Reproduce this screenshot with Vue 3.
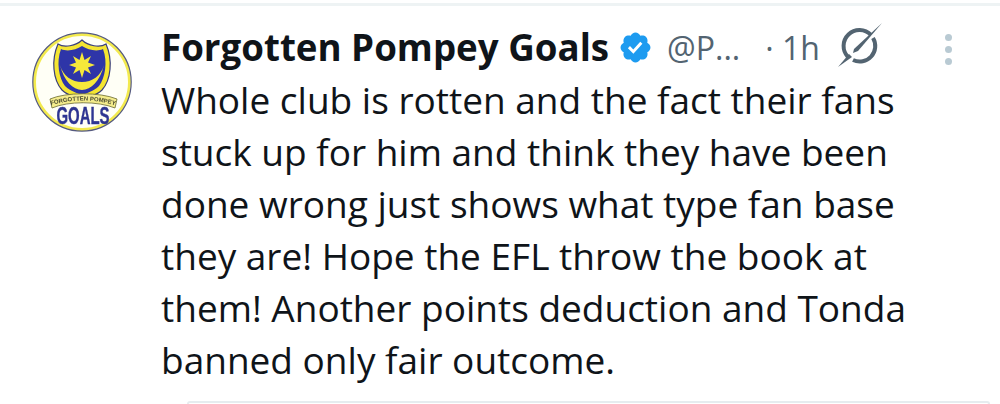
<script setup>
const lines = [
  'Whole club is rotten and the fact their fans',
  'stuck up for him and think they have been',
  'done wrong just shows what type fan base',
  'they are! Hope the EFL throw the book at',
  'them! Another points deduction and Tonda',
  'banned only fair outcome.',
]
</script>

<template>
  <div class="tweet">
    <div class="avatar-col">
      <svg class="avatar" width="100" height="100" viewBox="0 0 100 100">
        <circle cx="50" cy="50" r="47.500" fill="#fffff6" stroke="#f3ea4e" stroke-width="3" />
        <circle cx="50" cy="50" r="49.200" fill="none" stroke="#555a80" stroke-width="1.200" />
        <path d="M50 8 C56 14 68 16 74 12 C81 28 79 48 70 58 C63 65 55 64 50 70 C45 64 37 65 30 58 C21 48 19 28 26 12 C32 16 44 14 50 8Z" fill="#f4e531" stroke="#3a3f7a" stroke-width="1.200" />
        <path d="M50 14 C56 18 65 20 71 17 C76 30 73 46 67 54 C61 60 55 60 50 64 C45 60 39 60 33 54 C27 46 24 30 29 17 C35 20 44 18 50 14Z" fill="#2e35a8" />
        <path d="M28 33 C32 49 41 58 50 58 C59 58 68 49 72 33 C69 44 60 50 50 50 C40 50 31 44 28 33Z" fill="#f6e93a" />
        <path d="M50 20 L52.500 28 L59 24 L56 30.500 L63 33 L56 35.500 L59 42 L52.500 38 L50 46 L47.500 38 L41 42 L44 35.500 L37 33 L44 30.500 L41 24 L47.500 28Z" fill="#f6e93a" />
        <path d="M18 67 C34 60 68 60 85 67 L83 76 C66 69 36 69 20 76Z" fill="#f4ec8c" stroke="#6a6a30" stroke-width="0.800" />
        <path id="banner-arc" d="M14 75 Q51 62 88 75" fill="none" />
        <text class="logo-small" text-anchor="middle">
          <textPath href="#banner-arc" startOffset="50%">FORGOTTEN POMPEY</textPath>
        </text>
        <text x="51" y="92" text-anchor="middle" textLength="53" lengthAdjust="spacingAndGlyphs" class="logo-goals">GOALS</text>
      </svg>
    </div>
    <div class="body">
      <div class="head">
        <span class="name">Forgotten Pompey Goals</span>
        <svg class="badge" width="35" height="35" viewBox="0 0 24 24">
          <path fill="#1d9bf0" d="M22.250 12c0-1.430-.880-2.670-2.190-3.340.460-1.390.200-2.900-.810-3.910s-2.520-1.270-3.910-.810c-.660-1.310-1.910-2.190-3.340-2.190s-2.670.880-3.330 2.190c-1.400-.460-2.910-.200-3.920.810s-1.260 2.520-.800 3.910c-1.310.670-2.200 1.910-2.200 3.340s.890 2.670 2.200 3.340c-.460 1.390-.210 2.900.800 3.910s2.520 1.260 3.910.810c.670 1.310 1.910 2.190 3.340 2.190s2.680-.880 3.340-2.190c1.390.450 2.900.200 3.910-.810s1.270-2.520.810-3.910c1.310-.670 2.190-1.910 2.190-3.340zm-11.710 4.200L6.800 12.460l1.410-1.420 2.260 2.260 4.800-5.230 1.470 1.360-6.200 6.770z" />
        </svg>
        <span class="handle">@P...</span>
        <span class="time">· 1h</span>
        <svg class="grok" width="48" height="46" viewBox="0 0 48 46">
          <path d="M36 13 A15.500 15.500 0 0 0 13 35" fill="none" stroke="#536471" stroke-width="4" />
          <path d="M14 32 L3 45 L17 35Z" fill="#536471" />
          <path d="M38 16 A15.500 15.500 0 0 1 18 38" fill="none" stroke="#536471" stroke-width="4" />
          <path d="M47 1 L19 27 L18 31 L23 29Z" fill="#536471" />
        </svg>
        <span class="more">
          <i></i><i></i><i></i>
        </span>
      </div>
      <div class="text">
        <div v-for="line in lines" :key="line">{{ line }}</div>
      </div>
    </div>
  </div>
  <div class="card-top"></div>
</template>

<style>
html, body { margin: 0; background: #fff; overflow: hidden; height: 404px; }
</style>

<style scoped>
.tweet {
  width: 1000px;
  height: 398px;
  box-sizing: border-box;
  border-top: 3px solid #eef3f4;
  margin-top: 3px;
  display: flex;
  font-family: "Open Sans", "Liberation Sans", sans-serif;
  color: #0f1419;
}
.avatar-col { width: 161px; padding: 26px 0 0 32px; box-sizing: border-box; }
.avatar { display: block; filter: blur(0.4px); overflow: visible; }
.logo-small { font: 700 6px "Liberation Sans", sans-serif; fill: #4a4a30; }
.logo-goals { font: 700 23px "Liberation Sans", sans-serif; fill: #2e3591; stroke: #2e3591; stroke-width: 0.400px; }
.body { flex: 1; padding-top: 18px; }
.head { display: flex; align-items: center; height: 46px; position: relative; }
.name { font-size: 36.700px; font-weight: 700; }
.badge { margin-left: 9px; }
.handle { margin-left: 14px; font-size: 32px; color: #536471; }
.time { margin-left: 25px; font-size: 32px; color: #536471; }
.grok { margin-left: 15px; margin-top: -4px; }
.more {
  position: absolute; left: 784px; top: 10px;
  display: flex; flex-direction: column; gap: 5px;
}
.more i { display: block; width: 7px; height: 7px; border-radius: 50%; background: #b9cad3; }
.text { font-size: 37px; line-height: 52px; margin-top: 4px; white-space: nowrap; }
.card-top {
  position: absolute; left: 187px; top: 401px; width: 803px; height: 3px;
  box-sizing: border-box; border: 2px solid #e6ecef; border-bottom: 0; border-radius: 16px 16px 0 0;
}
</style>
